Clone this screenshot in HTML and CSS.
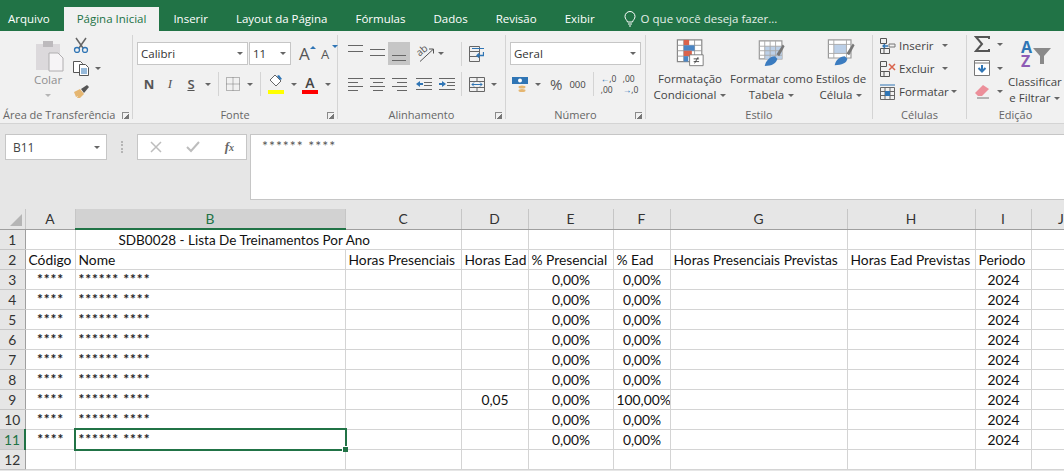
FILE: index.html
```html
<!DOCTYPE html>
<html lang="pt-BR">
<head>
    <meta charset="UTF-8">
    <title>SDB0028 - Excel</title>
    <link rel="stylesheet" href="styles.css">
</head>
<body>
    <nav class="tabs">
        <span class="tab tab-file">Arquivo</span>
        <span class="tab tab-active">Página Inicial</span>
        <span class="tab">Inserir</span>
        <span class="tab">Layout da Página</span>
        <span class="tab">Fórmulas</span>
        <span class="tab">Dados</span>
        <span class="tab">Revisão</span>
        <span class="tab">Exibir</span>
        <span class="tab tab-tell">
            <svg width="12" height="16" viewBox="0 0 12 16" fill="none" stroke="#fff"><path d="M3.500 11C3 9 1 8 1 5.500a5 5 0 0 1 10 0C11 8 9 9 8.500 11zM4 13h4M5 15h2"/></svg>
            O que você deseja fazer...
        </span>
    </nav>

    <section class="ribbon">
        <!-- Área de Transferência -->
        <div class="group group-clip">
            <div class="group-body clip-body">
                <div class="big-btn paste-btn">
                    <svg class="paste-icon" width="28" height="32" viewBox="0 0 28 32"><path d="M0 4h24v26H0z" fill="#dcd9dc"/><path d="M7 1h10v6H7z" fill="#bdbabd"/><path d="M13 13h9l5 5v13H13z" fill="#f6f4f6" stroke="#b0aeb0"/></svg>
                    <span class="muted">Colar</span>
                    <i class="caret caret-light"></i>
                </div>
                <div class="clip-tools">
                    <svg width="16" height="16" viewBox="0 0 16 16" fill="none"><path d="M3 1l7 10M13 1L6 11" stroke="#666" stroke-width="1.500"/><circle cx="4" cy="13" r="2.500" stroke="#2f75b5" stroke-width="1.300"/><circle cx="12" cy="13" r="2.500" stroke="#2f75b5" stroke-width="1.300"/></svg>
                    <span class="with-caret"><svg width="16" height="15" viewBox="0 0 16 15" fill="#fff" stroke="#555"><path d="M.5.500h7l2 2v9h-9z"/><path d="M6.500 3.500h6l3 3v8h-9z"/><path d="M8 8h6M8 10h6M8 12h6" stroke="#2f75b5"/></svg><i class="caret"></i></span>
                    <svg width="17" height="15" viewBox="0 0 17 15"><path d="M1 8l6-3 4 5-4 4H4l1-2-2 1z" fill="#e5b671"/><path d="M8 5l6-4 2 2-5 6z" fill="#555"/></svg>
                </div>
            </div>
            <footer class="group-label">Área de Transferência<i class="launcher"></i></footer>
        </div>

        <!-- Fonte -->
        <div class="group group-font">
            <div class="group-body stack">
                <div class="tool-row row-top">
                    <span class="combo combo-font">Calibri<i class="caret"></i></span>
                    <span class="combo combo-size">11<i class="caret"></i></span>
                    <span class="grow-a">A<i class="tri tri-up"></i></span>
                    <span class="grow-a grow-small">A<i class="tri tri-down"></i></span>
                </div>
                <div class="tool-row row-bottom font-tools">
                    <b class="fmt">N</b>
                    <i class="fmt fmt-i">I</i>
                    <u class="fmt fmt-s">S</u>
                    <i class="caret"></i>
                    <span class="sep"></span>
                    <svg width="14" height="14" viewBox="0 0 14 14" fill="none" stroke="#777" stroke-dasharray="1 1"><path d="M.5.500h13v13H.500zM7 .500v13M.5 7h13"/></svg>
                    <i class="caret"></i>
                    <span class="sep"></span>
                    <span class="color-tool">
                        <svg width="16" height="13" viewBox="0 0 16 13" fill="none"><path d="M7 1l6 6-5 5-6-6z" fill="#fff" stroke="#666"/><path d="M11 1l3 4-2 1-3-4z" fill="#2f75b5"/></svg>
                        <i class="swatch swatch-yellow"></i>
                    </span>
                    <i class="caret"></i>
                    <span class="color-tool color-a">A<i class="swatch swatch-red"></i></span>
                    <i class="caret"></i>
                </div>
            </div>
            <footer class="group-label">Fonte<i class="launcher"></i></footer>
        </div>

        <!-- Alinhamento -->
        <div class="group group-align">
            <div class="group-body stack">
                <div class="tool-row row-top align-tools">
                    <span class="lines lines-top"><i></i><i></i></span>
                    <span class="lines lines-mid"><i></i><i></i></span>
                    <span class="lines lines-bottom"><i></i><i></i></span>
                    <span class="with-caret orient"><svg class="text-icon" width="18" height="18" viewBox="0 0 18 18" fill="none" stroke="#555"><text class="orient-text" x="0" y="9" transform="rotate(-40 5 7)">ab</text><path d="M3 16.500L16 4.500M12 4h4.500v4.500"/></svg><i class="caret"></i></span>
                    <span class="sep sep-align"></span>
                    <svg width="15" height="16" viewBox="0 0 15 16" fill="none"><path d="M.5.500h10v15H.500zM.5 5.500h10M.5 10.500h10" stroke="#666"/><path d="M3 2.500h12" stroke="#2f75b5"/><path d="M14.500 6v3.500H8M10 7.500l-2 2 2 2" stroke="#2f75b5" stroke-width="1.300"/></svg>
                </div>
                <div class="tool-row row-bottom align-tools">
                    <span class="lines lines-left"><i></i><i></i><i></i><i></i></span>
                    <span class="lines lines-center"><i></i><i></i><i></i><i></i></span>
                    <span class="lines lines-right"><i></i><i></i><i></i><i></i></span>
                    <svg class="indent" width="16" height="12" viewBox="0 0 16 12" fill="none"><path d="M0 .500h16M8 4.500h8M8 7.500h8M0 11.500h16" stroke="#666"/><path d="M4 3L0 6l4 3z" fill="#2f75b5"/><path d="M3 6h4" stroke="#2f75b5" stroke-width="2"/></svg>
                    <svg width="16" height="12" viewBox="0 0 16 12" fill="none"><path d="M0 .500h16M8 4.500h8M8 7.500h8M0 11.500h16" stroke="#666"/><path d="M3 3l4 3-4 3z" fill="#2f75b5"/><path d="M0 6h4" stroke="#2f75b5" stroke-width="2"/></svg>
                    <span class="sep sep-align"></span>
                    <span class="with-caret merge"><svg width="16" height="15" viewBox="0 0 16 15" fill="none"><path d="M.5.500h15v14H.500zM.5 4.500h15M.5 10.500h15M8 .500v4M8 10.500v4" stroke="#666"/><path d="M3 7.500h10M5 5.500l-2 2 2 2M11 5.500l2 2-2 2" stroke="#2f75b5"/></svg><i class="caret"></i></span>
                </div>
            </div>
            <footer class="group-label">Alinhamento<i class="launcher"></i></footer>
        </div>

        <!-- Número -->
        <div class="group group-number">
            <div class="group-body stack">
                <div class="tool-row row-top">
                    <span class="combo combo-number">Geral<i class="caret"></i></span>
                </div>
                <div class="tool-row row-bottom number-tools">
                    <span class="with-caret"><svg width="17" height="17" viewBox="0 0 17 17"><path d="M0 1h16v7H0z" fill="#2f75b5"/><circle cx="8" cy="4.500" r="2" fill="#fff"/><ellipse cx="10" cy="11" rx="3.500" ry="1.500" fill="#e5b671"/><ellipse cx="10" cy="14.500" rx="3.500" ry="1.500" fill="#e5b671"/></svg><i class="caret"></i></span>
                    <span class="pct">%</span>
                    <span class="thou">000</span>
                    <span class="sep"></span>
                    <span class="dec"><em><s>←</s>,0</em><em>,00</em></span>
                    <span class="dec"><em>,00</em><em><s>→</s>,0</em></span>
                </div>
            </div>
            <footer class="group-label">Número<i class="launcher"></i></footer>
        </div>

        <!-- Estilo -->
        <div class="group group-style">
            <div class="group-body style-body">
                <div class="big-btn">
                    <svg width="31" height="31" viewBox="0 0 31 31"><path d="M1 1h27v24H1z" fill="#fff" stroke="#888" stroke-width="1.300"/><path d="M1 7h27M1 13h27M1 19h27M8 1v24M20 1v24" stroke="#999" fill="none"/><path d="M8 1h6v6H8z" fill="#d9634c"/><path d="M8 7h12v6H8z" fill="#4a86c5"/><path d="M8 13h9v6H8z" fill="#d9634c"/><path d="M8 19h5v6H8z" fill="#4a86c5"/><path d="M14.500 17.500h15v12h-15z" fill="#fff" stroke="#777"/><path d="M19 22h6M19 25h6M24 20l-4 7" stroke="#444" fill="none"/></svg>
                    <span class="big-text">Formatação<br>Condicional<i class="caret"></i></span>
                </div>
                <div class="big-btn">
                    <svg width="31" height="31" viewBox="0 0 31 31"><path d="M2 2h25v20H2z" fill="#fff" stroke="#999" stroke-width="1.300"/><path d="M8 8h19v14H8z" fill="#bcd0e8"/><path d="M2 8h25M2 13h25M2 18h25M8 2v20M14 2v20M20 2v20" stroke="#a9a9a9" fill="none"/><path d="M30 8l-6 11-3-2 7-11z" fill="#777"/><path d="M8 30c1-6 6-11 11-11l3 3c-1 5-6 8-14 8z" fill="#3b7cc0"/></svg>
                    <span class="big-text">Formatar como<br>Tabela<i class="caret"></i></span>
                </div>
                <div class="big-btn">
                    <svg width="31" height="31" viewBox="0 0 31 31"><path d="M1 1h25v20H1z" fill="#fff" stroke="#999" stroke-width="1.300"/><path d="M7 6h14v10H7z" fill="#bcd0e8"/><path d="M1 6h25M1 16h25M7 1v20M21 1v20" stroke="#a9a9a9" fill="none"/><path d="M30 7l-6 11-3-2 7-11z" fill="#777"/><path d="M8 29c1-6 6-10 11-10l3 3c-1 5-6 7-14 7z" fill="#3b7cc0"/></svg>
                    <span class="big-text">Estilos de<br>Célula<i class="caret"></i></span>
                </div>
            </div>
            <footer class="group-label">Estilo</footer>
        </div>

        <!-- Células -->
        <div class="group group-cells">
            <div class="group-body cells-body">
                <span class="cell-action"><svg width="17" height="16" viewBox="0 0 17 16" fill="none"><path d="M1.500.500h6v5h-6zM1.500 10.500h9v5h-9zM5 10.500v5" stroke="#555"/><path d="M4 8h5M6 6L4 8l2 2" stroke="#2f75b5" stroke-width="1.300"/><path d="M10 6h6v3h-6z" stroke="#777"/></svg>Inserir<i class="caret"></i></span>
                <span class="cell-action"><svg width="17" height="16" viewBox="0 0 17 16" fill="none"><path d="M1.500.500h6v5h-6zM1.500 10.500h9v5h-9zM5 10.500v5M1.500 5.500v5" stroke="#555"/><path d="M10 3l6 6M16 3l-6 6" stroke="#d9634c" stroke-width="1.500"/></svg>Excluir<i class="caret"></i></span>
                <span class="cell-action"><svg width="17" height="16" viewBox="0 0 17 16" fill="none"><path d="M1.500 3.500h14v12h-14zM1.500 7.500h14M1.500 11.500h14M6 3.500v12M11 3.500v12" stroke="#666"/><path d="M6 7h5v5H6z" fill="#2f75b5"/><path d="M1 1h15" stroke="#2f75b5"/></svg>Formatar<i class="caret"></i></span>
            </div>
            <footer class="group-label">Células</footer>
        </div>

        <!-- Edição -->
        <div class="group group-edit">
            <div class="group-body edit-body">
                <div class="edit-tools">
                    <span class="with-caret"><svg width="16" height="16" viewBox="0 0 16 16" fill="none" stroke="#555" stroke-width="2"><path d="M15 3V1H2l6 7-6 7h13v-2"/></svg><i class="caret"></i></span>
                    <span class="with-caret"><svg width="16" height="16" viewBox="0 0 16 16" fill="none"><path d="M.5.500h15v15H.500z" fill="#fff" stroke="#777"/><path d="M.5 3h15" stroke="#777"/><path d="M8 5v6M4.500 8L8 11.500 11.500 8" stroke="#2f75b5" stroke-width="2"/></svg><i class="caret"></i></span>
                    <span class="with-caret"><svg width="16" height="15" viewBox="0 0 16 15"><path d="M1 9l8-8 6 4-7 7H4z" fill="#ec8f9a"/><path d="M3 14h12" stroke="#777"/></svg><i class="caret"></i></span>
                </div>
                <div class="big-btn sort-btn">
                    <svg class="text-icon" width="32" height="31" viewBox="0 0 32 31"><text class="az az-a" x="2" y="14">A</text><text class="az az-z" x="2" y="28">Z</text><path d="M14 9h18l-7 8v8h-4v-8z" fill="#8a8a8a"/></svg>
                    <span class="big-text">Classificar<br>e Filtrar<i class="caret"></i></span>
                </div>
            </div>
            <footer class="group-label">Edição</footer>
        </div>
    </section>

    <section class="formula-bar">
        <div class="name-box">B11<i class="caret"></i></div>
        <div class="grip"></div>
        <div class="fx-box">
            <svg width="12" height="12" viewBox="0 0 12 12" fill="none" stroke="#bdbdbd" stroke-width="1.500"><path d="M1 1l10 10M11 1L1 11"/></svg>
            <svg width="14" height="12" viewBox="0 0 14 12" fill="none" stroke="#bdbdbd" stroke-width="2"><path d="M1 6l4 4 8-9"/></svg>
            <span class="fx">f<small>x</small></span>
        </div>
        <div class="formula-input">****** ****</div>
    </section>

    <table class="sheet">
        <colgroup>
            <col class="c-row"><col class="c-a"><col class="c-b"><col class="c-c"><col class="c-d"><col class="c-e"><col class="c-f"><col class="c-g"><col class="c-h"><col class="c-i"><col class="c-j">
        </colgroup>
        <thead>
            <tr>
                <th class="corner"><i></i></th><th>A</th><th class="col-sel">B</th><th>C</th><th>D</th><th>E</th><th>F</th><th>G</th><th>H</th><th>I</th><th>J</th>
            </tr>
        </thead>
        <tbody>
            <tr><th>1</th><td></td><td class="title">SDB0028 - Lista De Treinamentos Por Ano</td><td></td><td></td><td></td><td></td><td></td><td></td><td></td><td></td></tr>
            <tr><th>2</th><td>Código</td><td>Nome</td><td>Horas Presenciais</td><td>Horas Ead</td><td>% Presencial</td><td>% Ead</td><td>Horas Presenciais Previstas</td><td>Horas Ead Previstas</td><td>Periodo</td><td></td></tr>
            <tr><th>3</th><td class="ctr mask">****</td><td class="mask">****** ****</td><td></td><td></td><td class="ctr">0,00%</td><td class="ctr">0,00%</td><td></td><td></td><td class="ctr">2024</td><td></td></tr>
            <tr><th>4</th><td class="ctr mask">****</td><td class="mask">****** ****</td><td></td><td></td><td class="ctr">0,00%</td><td class="ctr">0,00%</td><td></td><td></td><td class="ctr">2024</td><td></td></tr>
            <tr><th>5</th><td class="ctr mask">****</td><td class="mask">****** ****</td><td></td><td></td><td class="ctr">0,00%</td><td class="ctr">0,00%</td><td></td><td></td><td class="ctr">2024</td><td></td></tr>
            <tr><th>6</th><td class="ctr mask">****</td><td class="mask">****** ****</td><td></td><td></td><td class="ctr">0,00%</td><td class="ctr">0,00%</td><td></td><td></td><td class="ctr">2024</td><td></td></tr>
            <tr><th>7</th><td class="ctr mask">****</td><td class="mask">****** ****</td><td></td><td></td><td class="ctr">0,00%</td><td class="ctr">0,00%</td><td></td><td></td><td class="ctr">2024</td><td></td></tr>
            <tr><th>8</th><td class="ctr mask">****</td><td class="mask">****** ****</td><td></td><td></td><td class="ctr">0,00%</td><td class="ctr">0,00%</td><td></td><td></td><td class="ctr">2024</td><td></td></tr>
            <tr><th>9</th><td class="ctr mask">****</td><td class="mask">****** ****</td><td></td><td class="ctr">0,05</td><td class="ctr">0,00%</td><td class="ctr">100,00%</td><td></td><td></td><td class="ctr">2024</td><td></td></tr>
            <tr><th>10</th><td class="ctr mask">****</td><td class="mask">****** ****</td><td></td><td></td><td class="ctr">0,00%</td><td class="ctr">0,00%</td><td></td><td></td><td class="ctr">2024</td><td></td></tr>
            <tr><th class="row-sel">11</th><td class="ctr mask">****</td><td class="mask active-cell">****** ****<i class="selection"><i class="handle"></i></i></td><td></td><td></td><td class="ctr">0,00%</td><td class="ctr">0,00%</td><td></td><td></td><td class="ctr">2024</td><td></td></tr>
            <tr><th>12</th><td></td><td></td><td></td><td></td><td></td><td></td><td></td><td></td><td></td><td></td></tr>
        </tbody>
    </table>
</body>
</html>
```

FILE: styles.css
```css
html, body {
    margin: 0;
    height: 471px;
    overflow: hidden;
}
body {
    font-family: "Open Sans", "Noto Sans", sans-serif;
    font-size: 11.5px;
    color: #444;
    background: #e6e6e6;
}

/* Abas */
.tabs {
    display: flex;
    align-items: flex-end;
    height: 31px;
    background: #217346;
    color: #fff;
    box-sizing: border-box;
    padding-top: 7px;
}
.tab {
    padding: 0 14px;
    height: 24px;
    line-height: 24px;
    white-space: nowrap;
}
.tab-file {
    padding: 0 14px 0 8px;
}
.tab-active {
    background: #f1f1f1;
    color: #217346;
    padding: 0 13px;
}
.tab-tell {
    display: flex;
    align-items: center;
    gap: 5px;
    padding-left: 15px;
    color: #e3efe8;
}

/* Faixa de opções */
.ribbon {
    display: flex;
    height: 92px;
    background: #f1f1f1;
    border-bottom: 1px solid #d4d4d4;
    overflow: hidden;
}
.group {
    display: flex;
    flex-direction: column;
    flex: none;
    box-sizing: border-box;
    margin-top: 4px;
    height: 84px;
    border-right: 1px solid #d4d4d4;
}
.group-clip { width: 133px; }
.group-font { width: 205px; }
.group-align { width: 168px; }
.group-number { width: 140px; }
.group-style { width: 227px; }
.group-cells { width: 94px; }
.group-edit { width: 97px; border-right: 0; }
.group-body {
    flex: 1;
    min-height: 0;
}
.group-label {
    position: relative;
    height: 16px;
    line-height: 24px;
    text-align: center;
    color: #666;
    font-size: 11px;
    white-space: nowrap;
}
.group-clip .group-label {
    text-align: left;
    padding-left: 3px;
}
.launcher {
    position: absolute;
    right: 3px;
    top: 9px;
    width: 6px;
    height: 6px;
    border: 1px solid #8a8a8a;
    border-width: 1px 0 0 1px;
    background: linear-gradient(135deg, transparent 55%, #777 55%);
}
.stack {
    display: flex;
    flex-direction: column;
}
.tool-row {
    display: flex;
    align-items: center;
}
.row-top {
    height: 23px;
    margin-top: 7px;
}
.row-bottom {
    height: 22px;
    margin-top: 8px;
}
.caret {
    display: inline-block;
    flex: none;
    width: 0;
    height: 0;
    border: 3px solid transparent;
    border-top: 3px solid #666;
    border-bottom: 0;
}
.caret-light {
    border-top-color: #b5b5b5;
}
.muted {
    color: #8f8f8f;
}
.sep {
    flex: none;
    width: 1px;
    height: 24px;
    background: #d4d4d4;
}
.with-caret {
    display: inline-flex;
    align-items: center;
    gap: 6px;
}
.text-icon {
    overflow: visible;
}

/* Botões grandes */
.big-btn {
    display: flex;
    flex-direction: column;
    align-items: center;
    text-align: center;
}
.big-text {
    margin-top: 4px;
    line-height: 16px;
    white-space: nowrap;
}
.big-text .caret {
    margin-left: 4px;
    vertical-align: middle;
}

/* Área de Transferência */
.clip-body {
    display: flex;
    padding: 5px 0 0 34px;
}
.paste-btn {
    width: 28px;
}
.paste-icon {
    flex: none;
    margin-left: 4px;
}
.paste-btn .muted {
    margin-top: 1px;
    line-height: 14px;
}
.paste-btn .caret {
    margin-top: 7px;
}
.clip-tools {
    display: flex;
    flex-direction: column;
    align-items: flex-start;
    gap: 8px;
    margin: -3px 0 0 11px;
}

/* Combos */
.combo {
    display: flex;
    align-items: center;
    justify-content: space-between;
    box-sizing: border-box;
    height: 23px;
    padding: 0 4px 0 3px;
    background: #fff;
    border: 1px solid #c6c6c6;
    color: #333;
}
.combo-font {
    width: 111px;
    margin-left: 4px;
}
.combo-size {
    width: 42px;
    margin-left: 1px;
}
.combo-number {
    width: 131px;
    margin-left: 4px;
    padding-left: 3px;
}
.grow-a {
    position: relative;
    margin-left: 8px;
    width: 14px;
    font-size: 17px;
    line-height: 20px;
    color: #555;
}
.grow-small {
    font-size: 13px;
    margin-left: 8px;
    line-height: 22px;
}
.tri {
    position: absolute;
    top: 2px;
    right: -3px;
    border: 3px solid transparent;
}
.tri-up {
    border-top: 0;
    border-bottom: 3px solid #2f75b5;
}
.tri-down {
    border-bottom: 0;
    border-top: 3px solid #2f75b5;
}

/* Fonte */
.font-tools {
    gap: 7px;
    padding-left: 9px;
}
.fmt {
    width: 14px;
    text-align: center;
    font-family: "Liberation Serif", serif;
    font-size: 13px;
    color: #555;
}
b.fmt {
    font-family: "Open Sans", sans-serif;
}
.fmt-s {
    font-family: "Open Sans", sans-serif;
    font-weight: 600;
}
.color-tool {
    position: relative;
    display: flex;
    flex-direction: column;
    align-items: center;
    width: 16px;
    height: 20px;
}
.color-a {
    font-size: 14px;
    font-weight: 600;
    line-height: 17px;
    margin-left: -2px;
}
.swatch {
    position: absolute;
    left: 0;
    right: 0;
    bottom: 0;
    height: 4px;
}
.swatch-yellow { background: #ffff00; }
.swatch-red { background: #ff0000; }

/* Alinhamento */
.align-tools {
    gap: 7px;
    padding-left: 10px;
}
.lines {
    display: flex;
    flex-direction: column;
    width: 15px;
    gap: 3px;
    flex: none;
}
.lines i {
    display: block;
    height: 1px;
    background: #666;
}
.lines-top {
    align-self: flex-start;
    margin-top: 3px;
    gap: 5px;
}
.lines-mid {
    align-self: flex-start;
    margin-top: 7px;
    gap: 5px;
}
.lines-bottom {
    box-sizing: border-box;
    justify-content: flex-end;
    width: 22px;
    height: 23px;
    margin-left: -4px;
    padding: 0 4px 4px;
    gap: 4px;
    background: #c6c6c6;
}
.lines-left i:nth-child(even) { width: 10px; }
.lines-center { align-items: center; }
.lines-center i { width: 15px; }
.lines-center i:nth-child(even) { width: 10px; }
.lines-right { align-items: flex-end; }
.lines-right i { width: 15px; }
.lines-right i:nth-child(even) { width: 10px; }
.orient {
    gap: 3px;
}
.orient-text {
    font-family: "Open Sans", sans-serif;
    font-size: 10px;
    fill: #555;
    stroke: none;
}
.indent {
    margin-left: 2px;
}
.sep-align {
    margin-left: -1px;
}
.row-top .sep-align {
    margin-left: 10px;
}

/* Número */
.number-tools {
    gap: 7px;
    padding-left: 6px;
}
.pct {
    font-size: 15px;
    color: #555;
    margin-left: 2px;
}
.thou {
    font-size: 9.500px;
}
.dec {
    display: flex;
    flex-direction: column;
    font-size: 8.500px;
    line-height: 11px;
    width: 15px;
    white-space: nowrap;
}
.dec em {
    font-style: normal;
}
.dec s {
    text-decoration: none;
    color: #2f75b5;
}

/* Estilo */
.style-body {
    display: flex;
    justify-content: space-between;
    padding: 4px 5px 0 6px;
}
.style-body .big-btn {
    flex: none;
}
.style-body .big-btn:nth-child(1) { width: 76px; }
.style-body .big-btn:nth-child(2) { width: 86px; }
.style-body .big-btn:nth-child(3) { width: 52px; }

/* Células */
.cells-body {
    display: flex;
    flex-direction: column;
    gap: 6px;
    padding: 2px 0 0 6px;
}
.cell-action {
    display: flex;
    align-items: center;
    gap: 3px;
    height: 17px;
}
.cell-action .caret {
    margin-left: 5px;
}
.cell-action:last-child .caret {
    margin-left: -1px;
}

/* Edição */
.edit-body {
    display: flex;
    padding: 1px 0 0 7px;
}
.edit-tools {
    display: flex;
    flex-direction: column;
    gap: 8px;
    width: 32px;
    flex: none;
}
.edit-tools .with-caret {
    gap: 7px;
}
.sort-btn {
    margin-left: 2px;
    padding-top: 3px;
}
.az {
    font-family: "Open Sans", sans-serif;
    font-weight: 700;
    font-size: 16px;
}
.az-a { fill: #2f75b5; }
.az-z { fill: #8e5bb5; }

/* Barra de fórmulas */
.formula-bar {
    display: flex;
    align-items: flex-start;
    height: 85px;
    box-sizing: border-box;
    padding-top: 10px;
}
.name-box {
    display: flex;
    align-items: center;
    justify-content: space-between;
    box-sizing: border-box;
    width: 102px;
    height: 26px;
    margin-left: 5px;
    padding: 0 6px 0 7px;
    background: #fff;
    border: 1px solid #c6c6c6;
    font-size: 12px;
}
.grip {
    width: 2px;
    height: 12px;
    margin: 7px 14px 0;
    border-left: 2px dotted #b5b5b5;
    box-sizing: border-box;
}
.fx-box {
    display: flex;
    align-items: center;
    justify-content: space-between;
    box-sizing: border-box;
    width: 110px;
    height: 26px;
    padding: 0 12px;
    background: #fff;
    border: 1px solid #c6c6c6;
}
.fx {
    font-family: "Liberation Serif", serif;
    font-style: italic;
    font-weight: 700;
    font-size: 13px;
    color: #666;
}
.fx small {
    font-size: 10px;
}
.formula-input {
    flex: 1;
    height: 66px;
    box-sizing: border-box;
    margin-left: 3px;
    padding: 3px 11px;
    background: #fff;
    border: 1px solid #c6c6c6;
    border-right: 0;
    font-family: Lato, "Liberation Sans", sans-serif;
    font-size: 14px;
    letter-spacing: 1px;
    line-height: 16px;
    color: #555;
}

/* Planilha */
.sheet {
    table-layout: fixed;
    width: 1091px;
    border-collapse: collapse;
    font-family: Lato, "Liberation Sans", sans-serif;
    font-size: 13.800px;
    color: #111;
    background: #fff;
}
.c-row { width: 25px; }
.c-a { width: 50px; }
.c-b { width: 270px; }
.c-c { width: 116px; }
.c-d { width: 67px; }
.c-e { width: 85px; }
.c-f { width: 57px; }
.c-g { width: 177px; }
.c-h { width: 128px; }
.c-i { width: 56px; }
.c-j { width: 60px; }
.sheet th, .sheet td {
    height: 20px;
    padding: 0;
    box-sizing: border-box;
    white-space: nowrap;
    overflow: hidden;
}
.sheet td {
    padding: 1px 2px 0 3px;
    border: 1px solid #d4d4d4;
}
.sheet th {
    background: #e6e6e6;
    font-weight: 400;
    text-align: center;
    color: #333;
    border: 1px solid #c6c6c6;
    border-width: 0 1px 1px 0;
}
.sheet thead th {
    border-bottom: 1px solid #9f9f9f;
}
.sheet tbody th {
    border-right: 1px solid #9f9f9f;
}
.sheet .corner {
    position: relative;
}
.corner i {
    position: absolute;
    right: 3px;
    bottom: 3px;
    border: 6px solid transparent;
    border-right-color: #b5b5b5;
    border-bottom-color: #b5b5b5;
}
.sheet .col-sel {
    background: #d2d2d2;
    color: #217346;
    border-bottom: 2px solid #217346;
}
.sheet .row-sel {
    background: #d2d2d2;
    color: #217346;
    border-right: 2px solid #217346;
}
.sheet .title {
    overflow: visible;
    padding-left: 43px;
    font-size: 13.500px;
    border-right-color: #fff;
    border-left: 0;
}
.sheet .ctr {
    text-align: center;
}
.sheet .mask {
    position: relative;
    color: #222;
    font-weight: 700;
    letter-spacing: .9px;
    vertical-align: top;
    padding-top: 1px;
    line-height: 15px;
}
.sheet .active-cell {
    overflow: visible;
}
.selection {
    position: absolute;
    left: -2px;
    top: -2px;
    right: -2px;
    bottom: -2px;
    border: 2px solid #217346;
}
.handle {
    position: absolute;
    right: -3px;
    bottom: -3px;
    width: 5px;
    height: 5px;
    background: #217346;
    border: 1px solid #fff;
    border-width: 1px 0 0 1px;
}
```
